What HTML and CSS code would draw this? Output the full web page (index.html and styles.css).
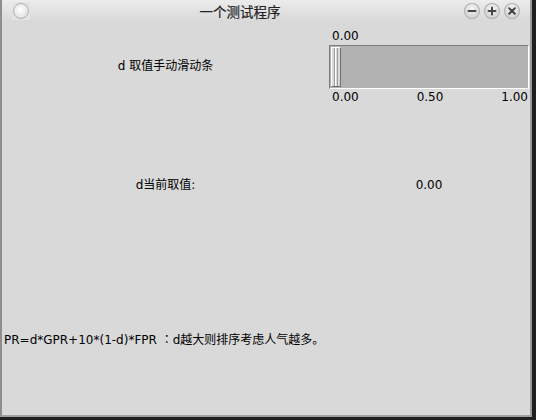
FILE: index.html
```html
<!DOCTYPE html>
<html>
<head>
<meta charset="utf-8">
<link rel="stylesheet" href="styles.css">
</head>
<body>
<div class="window">
  <div class="titlebar">
    <div class="app-icon"><span class="app-dot"></span></div>
    <div class="title">一个测试程序</div>
    <div class="controls">
      <span class="ctl"><svg width="16" height="16" viewBox="0 0 16 16"><path d="M4.5 8h7" stroke="#444" stroke-width="2" stroke-linecap="round"/></svg></span>
      <span class="ctl"><svg width="16" height="16" viewBox="0 0 16 16"><path d="M4.5 8h7M8 4.5v7" stroke="#444" stroke-width="2" stroke-linecap="round"/></svg></span>
      <span class="ctl"><svg width="16" height="16" viewBox="0 0 16 16"><path d="M5.2 5.2l5.6 5.6M10.8 5.2l-5.6 5.6" stroke="#444" stroke-width="2" stroke-linecap="round"/></svg></span>
    </div>
  </div>
  <div class="content">
    <div class="row row-scale">
      <div class="label-cell scale-label">d 取值手动滑动条</div>
      <div class="scale">
        <div class="scale-value">0.00</div>
        <div class="trough"><div class="handle"></div></div>
        <div class="ticks"><span>0.00</span><span>0.50</span><span>1.00</span></div>
      </div>
    </div>
    <div class="row row-current">
      <div class="label-cell">d当前取值:</div>
      <div class="value-cell">0.00</div>
    </div>
    <div class="formula">PR=d*GPR+10*(1-d)*FPR <span class="colon">：</span>d越大则排序考虑人气越多。</div>
  </div>
</div>
</body>
</html>
```
FILE: styles.css
```css
html, body {
  margin: 0;
  padding: 0;
}
body {
  background: #1f1f1f;
  width: 536px;
  height: 420px;
  overflow: hidden;
  font-family: "DejaVu Sans", "Noto Sans CJK SC", sans-serif;
  font-size: 12px;
  color: #000;
}
.window {
  width: 528px;
  height: 415px;
  border-left: 2px solid #8e8e8e;
  border-right: 2px solid #9a9a9a;
  border-bottom: 2px solid #a0a0a0;
  background: #d9d9d9;
  display: flex;
  flex-direction: column;
}
.titlebar {
  height: 22px;
  flex: none;
  background: linear-gradient(#ececec, #d8d8d8);
  display: flex;
  align-items: center;
}
.app-icon {
  width: 18px;
  height: 18px;
  margin-left: 10px;
  display: flex;
  align-items: center;
  justify-content: center;
  background: #e4e4e4;
}
.app-dot {
  width: 14px;
  height: 14px;
  border-radius: 50%;
  border: 1px solid #a8b2bc;
  background: radial-gradient(circle at 45% 40%, #ffffff, #e2e2e2 70%, #cfcfcf);
}
.title {
  flex: 1;
  text-align: center;
  font-size: 13.5px;
  color: #222;
  margin-left: 18px;
  margin-right: 32px;
  -webkit-text-stroke: 0.2px #222;
}
.controls {
  display: flex;
  gap: 4px;
  margin-right: 10px;
}
.ctl {
  width: 16px;
  height: 16px;
  border-radius: 50%;
  background: radial-gradient(circle at 50% 35%, #f6f6f6, #cfcfcf 75%, #b9b9b9);
  box-shadow: inset 0 0 0 1px #b0b0b0;
  display: flex;
}
.content {
  flex: 1;
  padding-top: 6px;
  display: flex;
  flex-direction: column;
}
.row {
  display: grid;
  grid-template-columns: 327px 200px;
  align-items: center;
}
.label-cell {
  text-align: center;
}
.scale-label {
  padding-bottom: 4px;
}
.scale {
  display: flex;
  flex-direction: column;
}
.scale-value {
  height: 15px;
  line-height: 15px;
  padding-left: 3px;
  padding-top: 1px;
}
.trough {
  margin-top: 1px;
  height: 40px;
  background: #b2b2b2;
  border-top: 1px solid #7c7c7c;
  border-left: 1px solid #7c7c7c;
  border-bottom: 1px solid #ffffff;
  border-right: 1px solid #ffffff;
  display: flex;
  padding: 1px;
  box-sizing: content-box;
}
.handle {
  width: 8px;
  border-left: 1px solid #ffffff;
  border-top: 1px solid #ffffff;
  border-right: 1px solid #6e6e6e;
  border-bottom: 1px solid #6e6e6e;
  background: linear-gradient(90deg, #d9d9d9 0 2px, #9a9a9a 2px 3px, #ffffff 3px 4px, #d9d9d9 4px 5px, #9a9a9a 5px 6px, #d9d9d9 6px);
}
.ticks {
  height: 16px;
  line-height: 16px;
  display: flex;
  justify-content: space-between;
  padding: 0 1px 0 3px;
}
.row-current {
  margin-top: 72px;
  line-height: 16px;
}
.value-cell {
  text-align: center;
}
.formula {
  margin-top: 138px;
  line-height: 16px;
  padding-left: 2px;
}
.colon {
  font-family: "Noto Sans CJK TC", sans-serif;
}
```
